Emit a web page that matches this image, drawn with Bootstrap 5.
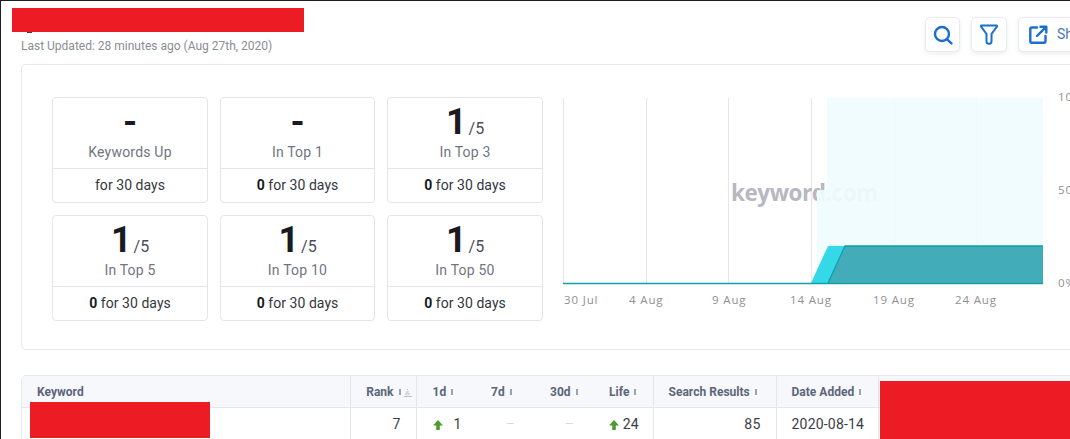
<!DOCTYPE html>
<html lang="en">
<head>
<meta charset="utf-8">
<title>Keyword report</title>
<link href="https://cdn.jsdelivr.net/npm/bootstrap@5.3.0/dist/css/bootstrap.min.css" rel="stylesheet">
<style>
html,body{height:439px;overflow:hidden}
body{font-family:Roboto,"Liberation Sans",sans-serif;background:#fff;border-top:1px solid #1c1c22;border-left:1px solid #1c1c22;width:1070px;position:relative}
.page-wrap{width:1100px;padding-left:20px}
.top-head{height:63px}
.updated{font-size:12px;color:#888d96;margin-top:38px;line-height:14px}
.tool-row{gap:11px;margin-top:16px;width:176px;flex:none}
.tool-btn{height:35px;width:35px;flex:none;background:#fff;border:1px solid #e8ebf0;border-radius:5px;box-shadow:0 2px 4px rgba(30,50,90,.08);color:#4a78b8;font-size:14px;padding:0}
.tool-btn.mid{width:36px}
.tool-btn.wide{width:83px;justify-content:flex-start;padding-left:10px;gap:9px}
.tool-btn svg{flex:none}
.main-panel{height:286px;border:1px solid #e7e9ed;border-radius:5px;padding:32px 30px 0;--bs-card-bg:#fff}
.stat-grid{display:grid;grid-template-columns:156px 155px 156px;grid-auto-rows:106px;align-content:start;gap:12px;width:491px;flex:none}
.stat-box{height:106px;border:1px solid #e3e5ea;border-radius:4px}
.stat-top{height:70px;padding-top:4px}
.big-num{font-size:36px;font-weight:700;line-height:40px;color:#181a24;height:41px}
.big-num small{font-size:16px;font-weight:400;color:#4a4d57;margin-left:2px}
.stat-label{font-size:14px;line-height:18px;color:#6f7682;letter-spacing:.2px}
.stat-foot{height:34px;border-top:1px solid #e3e5ea;font-size:14px;line-height:32px;color:#33363e;letter-spacing:.05px}
.stat-foot b{color:#181a24}
.chart-box{width:520px;height:230px;margin-left:20px;flex:none}
.chart-box svg{display:block;overflow:visible}
.ax{font-family:"Open Sans",sans-serif;font-size:11.5px;letter-spacing:.85px;fill:#8e9096}
.wm{font-family:"Open Sans",sans-serif;font-size:22.5px;font-weight:700;letter-spacing:-.45px;fill:#b7b8c1}
.data-panel{margin-top:25px;border:1px solid #e7e9ed;border-bottom:0;border-radius:5px 5px 0 0;overflow:hidden;height:70px}
.kw-table{table-layout:fixed;width:1079px;margin:0;border-collapse:collapse}
.kw-table col:nth-child(1){width:328px}
.kw-table col:nth-child(2){width:66px}
.kw-table col:nth-child(3){width:60px}
.kw-table col:nth-child(4),.kw-table col:nth-child(5),.kw-table col:nth-child(6){width:59px}
.kw-table col:nth-child(7){width:123px}
.kw-table col:nth-child(8){width:102px}
.kw-table th{height:31px;background:#f6f8fb;color:#5e6579;font-size:12px;font-weight:700;padding:2px 15px 0;border-bottom:1px solid #e3e6ec;white-space:nowrap;vertical-align:middle;letter-spacing:.02px}
.kw-table td{height:32px;font-size:14px;color:#3a3d46;padding:2px 15px 0;letter-spacing:.2px;white-space:nowrap;vertical-align:middle}
.kw-table th:first-child{padding-left:15px}
.kw-table th.rank-head{padding-right:4px;padding-left:0}
.kw-table .first-day{padding-left:16px}
.day-num{margin-left:11px}
.line-r{border-right:1px solid #e3e6ec}
.hint{display:inline-block;width:2px;height:6px;background:#9aa2b1;margin-left:5px;vertical-align:1px}
.sort-mark{display:inline-block;margin-left:3px;vertical-align:-1px}
.up-arrow{display:inline-block;vertical-align:-1px}
.none-dash{color:#d4d6da;font-size:11px;display:block;text-align:center;padding-left:10px}
.cover{position:absolute;background:#ed1c24}
.cover.c1{left:11px;top:7px;width:292px;height:24px}
.cover.c2{left:29px;top:401px;width:180px;height:36px}
.cover.c3{left:879px;top:380px;width:191px;height:58px}
.title-speck{position:absolute;left:26px;top:31px;width:5px;height:1px;background:#4a4420}
</style>
</head>
<body>
<div class="page-wrap">
  <div class="top-head d-flex justify-content-between">
    <div class="updated">Last Updated: 28 minutes ago (Aug 27th, 2020)</div>
    <div class="tool-row d-flex">
      <button class="tool-btn d-flex align-items-center justify-content-center" aria-label="Search">
        <svg width="20" height="20" viewBox="0 0 20 20" fill="none" stroke="#1a6fd1" stroke-width="2.4" stroke-linecap="round"><circle cx="9" cy="9" r="7"/><path d="M14.400 14.600l4 3.800"/></svg>
      </button>
      <button class="tool-btn mid d-flex align-items-center justify-content-center" aria-label="Filter">
        <svg width="18" height="21" viewBox="0 0 18 21" fill="none" stroke="#1a6fd1" stroke-width="2" stroke-linejoin="round"><path d="M1.500 1.500h15c.6 0 .8.600.4 1.100L11.500 10v7.500c0 1.500-1.100 2.300-2.500 2.300s-2.500-.8-2.500-2.300V10L1.100 2.600C.7 2.100.9 1.500 1.500 1.500z"/></svg>
      </button>
      <button class="tool-btn wide d-flex align-items-center">
        <svg width="19" height="19" viewBox="0 0 19 19" fill="none" stroke="#1a6fd1" stroke-width="2.400" stroke-linecap="round" stroke-linejoin="round"><path d="M8 2.500H2.800C1.800 2.500 1.300 3 1.300 4v12.200c0 1 .5 1.500 1.500 1.500H15c1 0 1.500-.5 1.500-1.500V11"/><path d="M8 11L16.800 2.200M11.500 1.700h5.800v5.800"/></svg>
        <span>Share</span>
      </button>
    </div>
  </div>

  <div class="card main-panel d-flex flex-row">
    <div class="stat-grid">
      <div class="stat-box text-center"><div class="stat-top"><div class="big-num">-</div><div class="stat-label">Keywords Up</div></div><div class="stat-foot">for 30 days</div></div>
      <div class="stat-box text-center"><div class="stat-top"><div class="big-num">-</div><div class="stat-label">In Top 1</div></div><div class="stat-foot"><b>0</b> for 30 days</div></div>
      <div class="stat-box text-center"><div class="stat-top"><div class="big-num">1<small>/5</small></div><div class="stat-label">In Top 3</div></div><div class="stat-foot"><b>0</b> for 30 days</div></div>
      <div class="stat-box text-center"><div class="stat-top"><div class="big-num">1<small>/5</small></div><div class="stat-label">In Top 5</div></div><div class="stat-foot"><b>0</b> for 30 days</div></div>
      <div class="stat-box text-center"><div class="stat-top"><div class="big-num">1<small>/5</small></div><div class="stat-label">In Top 10</div></div><div class="stat-foot"><b>0</b> for 30 days</div></div>
      <div class="stat-box text-center"><div class="stat-top"><div class="big-num">1<small>/5</small></div><div class="stat-label">In Top 50</div></div><div class="stat-foot"><b>0</b> for 30 days</div></div>
    </div>
    <div class="chart-box">
      <svg width="520" height="230" viewBox="563 97 520 230">
        <path d="M563.500 98V283M646.500 98V283M728.500 98V283M811.500 98V283" stroke="#e4e6ea"/>
        <text x="731" y="201" class="wm">keyword.com</text>
        <path d="M827 98H1043V246H845L828 283H811L817 270V190H827z" fill="#f0fcff" opacity=".92"/>
        <path d="M894.500 98V246M976.500 98V246" stroke="#edfafd"/>
        <path d="M811 283L828 246H845L828 283z" fill="#35d8e6"/>
        <path d="M828 283L845 246H1043V283z" fill="#42adb9"/>
        <path d="M563 283.500H1043M828 283L845 246H1043" fill="none" stroke="#119fac" stroke-width="1.300"/>
        <text x="564" y="304" class="ax">30 Jul</text>
        <text x="629" y="304" class="ax">4 Aug</text>
        <text x="712" y="304" class="ax">9 Aug</text>
        <text x="790" y="304" class="ax">14 Aug</text>
        <text x="873" y="304" class="ax">19 Aug</text>
        <text x="955" y="304" class="ax">24 Aug</text>
        <text x="1058" y="101" class="ax">100%</text>
        <text x="1058" y="194" class="ax">50%</text>
        <text x="1058" y="287" class="ax">0%</text>
      </svg>
    </div>
  </div>

  <div class="data-panel">
    <table class="kw-table">
      <colgroup><col><col><col><col><col><col><col><col><col></colgroup>
      <thead>
        <tr>
          <th class="line-r">Keyword</th>
          <th class="line-r rank-head text-end">Rank<i class="hint"></i><svg class="sort-mark" width="8" height="8" viewBox="0 0 8 8" stroke="#b5bac5"><path d="M3 .5h1M2 3h3M1 5h5M0 7.500h8"/></svg></th>
          <th class="first-day">1d<i class="hint"></i></th>
          <th>7d<i class="hint"></i></th>
          <th>30d<i class="hint"></i></th>
          <th class="line-r">Life<i class="hint"></i></th>
          <th class="line-r">Search Results<i class="hint"></i></th>
          <th class="line-r">Date Added<i class="hint"></i></th>
          <th></th>
        </tr>
      </thead>
      <tbody>
        <tr>
          <td class="line-r"></td>
          <td class="line-r text-end">7</td>
          <td class="first-day"><svg class="up-arrow" width="10" height="10" viewBox="0 0 10 10" fill="#4f9a35"><path d="M5 0l5 5.500H6.800V10H3.200V5.500H0z"/></svg><span class="day-num">1</span></td>
          <td><span class="none-dash">—</span></td>
          <td><span class="none-dash">—</span></td>
          <td class="line-r"><svg class="up-arrow" width="10" height="10" viewBox="0 0 10 10" fill="#4f9a35"><path d="M5 0l5 5.500H6.800V10H3.200V5.500H0z"/></svg> 24</td>
          <td class="line-r text-end">85</td>
          <td class="line-r">2020-08-14</td>
          <td></td>
        </tr>
      </tbody>
    </table>
  </div>
</div>
<div class="title-speck"></div>
<div class="cover c1"></div>
<div class="cover c2"></div>
<div class="cover c3"></div>
<script src="https://cdn.jsdelivr.net/npm/bootstrap@5.3.0/dist/js/bootstrap.bundle.min.js"></script>
</body>
</html>
